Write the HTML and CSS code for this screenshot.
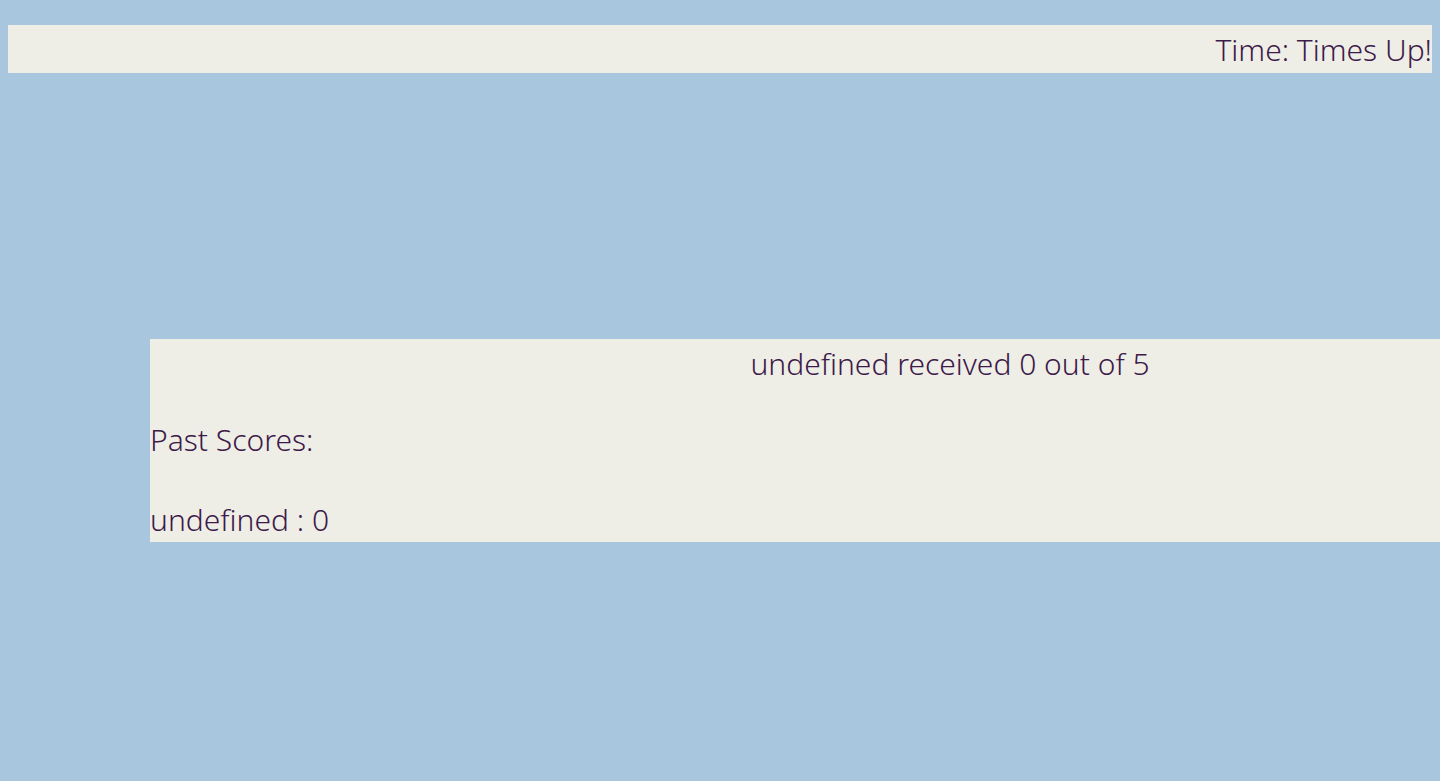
FILE: index.html
```html
<!DOCTYPE html>
<html>
<head>
<meta charset="utf-8">
<link rel="stylesheet" href="styles.css">
</head>
<body>
<header class="topbar">
  <span class="timer">Time: Times Up!</span>
</header>
<main class="results">
  <p class="result-line">undefined received 0 out of 5</p>
  <p class="past-title">Past Scores:</p>
  <p class="past-item">undefined : 0</p>
</main>
</body>
</html>
```
FILE: styles.css
```css
html, body {
  background: #a8c6de;
}
body {
  margin: 8px 0 8px 8px;
  font-family: "Noto Sans", sans-serif;
  color: #3d1a4a;
  font-weight: 300;
}
.topbar {
  margin: 17px 8px 0 0;
  height: 48px;
  background: #eeeee6;
  display: flex;
  align-items: center;
  justify-content: flex-end;
  font-size: 30px;
}
.results {
  margin: 266px 0 0 142px;
  background: #eeeee6;
  padding-top: 3px;
  font-size: 30px;
}
.results p {
  margin: 0;
  line-height: 44px;
}
.result-line {
  text-align: center;
  padding-left: 310px;
}
.results .past-title {
  margin-top: 32px;
}
.results .past-item {
  margin-top: 36px;
}
```
